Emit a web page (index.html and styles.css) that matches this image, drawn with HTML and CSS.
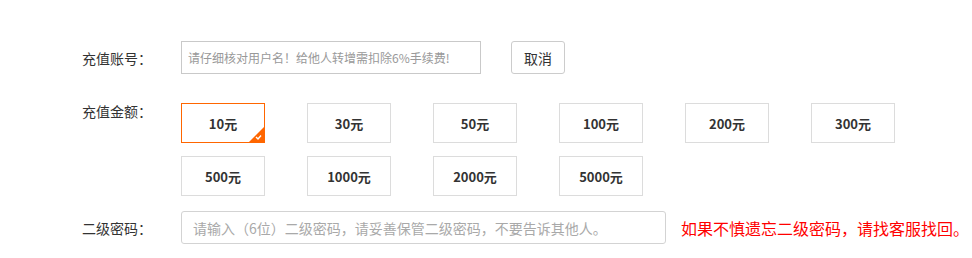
FILE: index.html
```html
<!DOCTYPE html>
<html lang="zh-CN">
<head>
<meta charset="utf-8">
<title>充值</title>
<link rel="stylesheet" href="styles.css">
</head>
<body>
<div class="form">
  <div class="row row-account">
    <span class="label">充值账号：</span>
    <input class="account-input" type="text" placeholder="请仔细核对用户名！给他人转增需扣除6%手续费!">
    <button class="cancel-btn" type="button">取消</button>
  </div>
  <div class="row row-amount">
    <span class="label label-top">充值金额：</span>
    <div class="amounts">
      <div class="amount selected">10元<svg class="corner" width="17" height="17" viewBox="0 0 17 17"><polygon points="17,0 17,17 0,17" fill="#ff6600"/><polyline points="8,11 10,13 13,9.5" fill="none" stroke="#fff" stroke-width="1.4"/></svg></div>
      <div class="amount">30元</div>
      <div class="amount">50元</div>
      <div class="amount">100元</div>
      <div class="amount">200元</div>
      <div class="amount">300元</div>
      <div class="amount">500元</div>
      <div class="amount">1000元</div>
      <div class="amount">2000元</div>
      <div class="amount">5000元</div>
    </div>
  </div>
  <div class="row row-password">
    <span class="label">二级密码：</span>
    <input class="password-input" type="text" placeholder="请输入（6位）二级密码，请妥善保管二级密码，不要告诉其他人。">
    <span class="tip">如果不慎遗忘二级密码，请找客服找回。</span>
  </div>
</div>
</body>
</html>
```

FILE: styles.css
```css
html, body {
  margin: 0;
  padding: 0;
  background: #fff;
}
body {
  font-family: "Microsoft YaHei", "Noto Sans CJK SC", "Liberation Sans", sans-serif;
  color: #333;
  font-size: 14px;
  width: 972px;
  overflow: hidden;
}
.form {
  padding: 41px 0 0 82px;
}
.row {
  display: flex;
}
.row-account,
.row-password {
  align-items: center;
  height: 33px;
}
.label {
  width: 99px;
  flex: none;
  font-size: 14px;
  color: #333;
  white-space: nowrap;
}
.label-top {
  line-height: 14px;
  padding-top: 1px;
}
input {
  box-sizing: border-box;
  height: 33px;
  margin: 0;
  font-family: inherit;
  outline: none;
  background: #fff;
}
.account-input {
  width: 300px;
  border: 1px solid #c9c9c9;
  padding: 0 6px;
  font-size: 12px;
}
.account-input::placeholder {
  color: #999;
}
.cancel-btn {
  box-sizing: border-box;
  margin-left: 30px;
  width: 54px;
  height: 33px;
  border: 1px solid #ccc;
  border-radius: 3px;
  background: #fff;
  font-family: inherit;
  font-size: 14px;
  color: #333;
  padding: 0;
}
.row-amount {
  margin-top: 29px;
  align-items: flex-start;
}
.amounts {
  display: grid;
  grid-template-columns: repeat(6, 84px);
  column-gap: 42px;
  row-gap: 13px;
}
.amount {
  position: relative;
  box-sizing: border-box;
  height: 40px;
  border: 1px solid #dcdcdc;
  display: flex;
  align-items: center;
  justify-content: center;
  font-weight: bold;
  font-size: 13px;
  color: #333;
}
.amount.selected {
  border-color: #ff6600;
}
.corner {
  position: absolute;
  right: -1px;
  bottom: -1px;
  display: block;
}
.row-password {
  margin-top: 15px;
}
.password-input {
  width: 485px;
  border: 1px solid #d3d3d3;
  border-radius: 3px;
  padding: 0 11px;
  font-size: 14px;
}
.password-input::placeholder {
  color: #a9a9a9;
}
.tip {
  margin-left: 15px;
  font-size: 16px;
  color: #ff0000;
  white-space: nowrap;
}
```
